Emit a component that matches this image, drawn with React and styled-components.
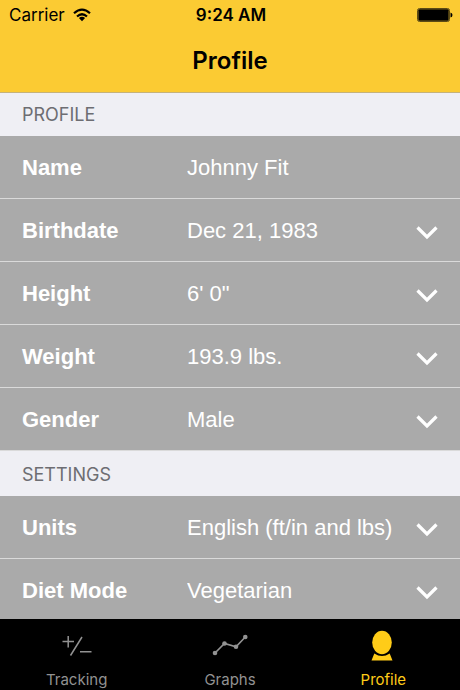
import React, { useState } from 'react'
import styled, { createGlobalStyle } from 'styled-components'

const GlobalStyle = createGlobalStyle`
  * {
    box-sizing: border-box;
  }

  body {
    margin: 0;
    font-family: Inter, 'Liberation Sans', sans-serif;
  }
`

const Screen = styled.div`
  display: flex;
  flex-direction: column;
  height: 100vh;
  background: #aaaaaa;
`

const Header = styled.header`
  flex: none;
  background: #fbcb33;
  border-bottom: 1px solid #c5b27a;
`

const StatusBar = styled.div`
  display: grid;
  grid-template-columns: 1fr auto 1fr;
  align-items: center;
  height: 30px;
  padding: 0 7px 0 9px;
  font-size: 17px;
  line-height: 30px;
  color: #000;
`

const Carrier = styled.div`
  display: flex;
  align-items: center;
  gap: 8px;
`

const Clock = styled.time`
  font-weight: 600;
`

const Battery = styled.svg`
  justify-self: end;
`

const Title = styled.h1`
  margin: 0;
  height: 62px;
  font-size: 24px;
  font-weight: 600;
  line-height: 62px;
  text-align: center;
  color: #000;
`

const Content = styled.main`
  flex: 1;
  min-height: 0;
  overflow: hidden;
`

const SectionTitle = styled.h2`
  margin: 0;
  padding: ${({ $first }) => ($first ? '0 22px' : '2px 22px 0')};
  background: #efeff4;
  font-size: 18px;
  font-weight: 400;
  line-height: 43px;
  color: #6d6d72;
`

const Row = styled.div`
  display: grid;
  grid-template-columns: 165px 1fr;
  align-items: center;
  position: relative;
  height: 63px;
  padding: 0 22px;
  border-bottom: 1px solid #dadada;
  font-family: 'Liberation Sans', Arial, sans-serif;
  font-size: 22px;
  color: #fff;
`

const Label = styled.label`
  padding-top: 2px;
  font-weight: 700;
`

const TextInput = styled.input`
  width: 100%;
  height: 62px;
  padding: 2px 0 0;
  border: 0;
  outline: 0;
  background: transparent;
  font: inherit;
  color: inherit;
`

const Select = styled.select`
  appearance: none;
  width: 100%;
  height: 62px;
  padding: 0;
  border: 0;
  outline: 0;
  background: transparent;
  font: inherit;
  color: inherit;

  option {
    color: #000;
  }
`

// sits over the select, which stays clickable across the whole row
const Chevron = styled.svg`
  position: absolute;
  top: 27px;
  right: 22px;
  pointer-events: none;
`

const TabBar = styled.nav`
  display: flex;
  flex: none;
  height: 71px;
  background: #000;
`

const Tab = styled.button`
  display: flex;
  flex: 1;
  flex-direction: column;
  align-items: center;
  padding: 8px 0 0;
  border: 0;
  background: transparent;
  font-family: inherit;
  font-size: 15px;
  line-height: 20px;
  color: ${({ $active }) => ($active ? '#ffcc18' : '#929292')};
`

const TabIcon = styled.svg`
  margin-bottom: 7px;
`

const profileFields = [
  { id: 'name', label: 'Name', value: 'Johnny Fit' },
  { id: 'birthdate', label: 'Birthdate', value: 'Dec 21, 1983', options: ['Dec 21, 1983'] },
  { id: 'height', label: 'Height', value: '6\' 0"', options: ['5\' 11"', '6\' 0"', '6\' 1"'] },
  { id: 'weight', label: 'Weight', value: '193.9 lbs.', options: ['193.9 lbs.'] },
  { id: 'gender', label: 'Gender', value: 'Male', options: ['Male', 'Female'] },
]

const settingsFields = [
  {
    id: 'units',
    label: 'Units',
    value: 'English (ft/in and lbs)',
    options: ['English (ft/in and lbs)', 'Metric (cm and kg)'],
  },
  { id: 'diet', label: 'Diet Mode', value: 'Vegetarian', options: ['Vegetarian', 'Vegan'] },
]

const TrackingIcon = () => (
  <TabIcon width="36" height="36" viewBox="0 0 36 36" fill="none" stroke="currentColor" strokeWidth="1.5">
    <path d="M3.5 14.5H15M9.2 9V20.5M11.5 28.5L23 10M21 24.7H32.5" />
  </TabIcon>
)

const GraphsIcon = () => (
  <TabIcon width="36" height="36" viewBox="0 0 36 36" fill="currentColor">
    <path d="M3 26L12.5 16.5L24 19.8L33.3 10" fill="none" stroke="currentColor" strokeWidth="1.6" />
    <circle cx="3" cy="26" r="2.3" />
    <circle cx="12.5" cy="16.5" r="2.3" />
    <circle cx="24" cy="19.8" r="2.3" />
    <circle cx="33.3" cy="10" r="2.3" />
  </TabIcon>
)

const ProfileIcon = () => (
  <TabIcon width="36" height="36" viewBox="0 0 36 36" fill="currentColor">
    <ellipse cx="17" cy="15.5" rx="9.8" ry="11.8" />
    <path d="M9.3 26.5Q17 31.5 24.700 26.5L27.5 33.5H6.5Z" />
  </TabIcon>
)

const tabs = [
  { name: 'Tracking', Icon: TrackingIcon },
  { name: 'Graphs', Icon: GraphsIcon },
  { name: 'Profile', Icon: ProfileIcon },
]

const Field = ({ field }) => {
  const [value, setValue] = useState(field.value)
  const handleChange = ({ target }) => setValue(target.value)

  return (
    <Row>
      <Label htmlFor={field.id}>{field.label}</Label>
      {field.options ? (
        <>
          <Select id={field.id} value={value} onChange={handleChange}>
            {field.options.map((option) => (
              <option key={option}>{option}</option>
            ))}
          </Select>
          <Chevron width="22" height="14" viewBox="0 0 22 14" fill="none" stroke="#fff" strokeWidth="3.2">
            <path d="M1.5 1.5L11 11L20.5 1.5" />
          </Chevron>
        </>
      ) : (
        <TextInput id={field.id} type="text" value={value} onChange={handleChange} />
      )}
    </Row>
  )
}

const App = () => {
  const [activeTab, setActiveTab] = useState('Profile')

  return (
    <Screen>
      <GlobalStyle />
      <Header>
        <StatusBar>
          <Carrier>
            Carrier
            <svg width="18" height="14" viewBox="0 0 18 14" fill="none" stroke="#000" strokeWidth="2.2">
              <path d="M1 5.2Q9 -2 17 5.2M4 8.5Q9 4 14 8.5" />
              <path d="M5.9 10Q9 7.5 12.1 10L9 13.2Z" fill="#000" stroke="none" />
            </svg>
          </Carrier>
          <Clock>9:24 AM</Clock>
          <Battery width="36" height="14" viewBox="0 0 36 14">
            <rect x="0.5" y="0.5" width="32" height="13" rx="2" fill="none" stroke="#5c4b16" />
            <rect x="1.3" y="1.3" width="30.4" height="11.4" rx="1" />
            <path d="M33.5 4.5Q35.5 5 35.5 7T33.5 9.5Z" />
          </Battery>
        </StatusBar>
        <Title>Profile</Title>
      </Header>

      <Content>
        <SectionTitle $first>PROFILE</SectionTitle>
        {profileFields.map((field) => (
          <Field key={field.id} field={field} />
        ))}
        <SectionTitle>SETTINGS</SectionTitle>
        {settingsFields.map((field) => (
          <Field key={field.id} field={field} />
        ))}
      </Content>

      <TabBar>
        {tabs.map(({ name, Icon }) => (
          <Tab key={name} type="button" $active={name === activeTab} onClick={() => setActiveTab(name)}>
            <Icon />
            {name}
          </Tab>
        ))}
      </TabBar>
    </Screen>
  )
}

export default App
